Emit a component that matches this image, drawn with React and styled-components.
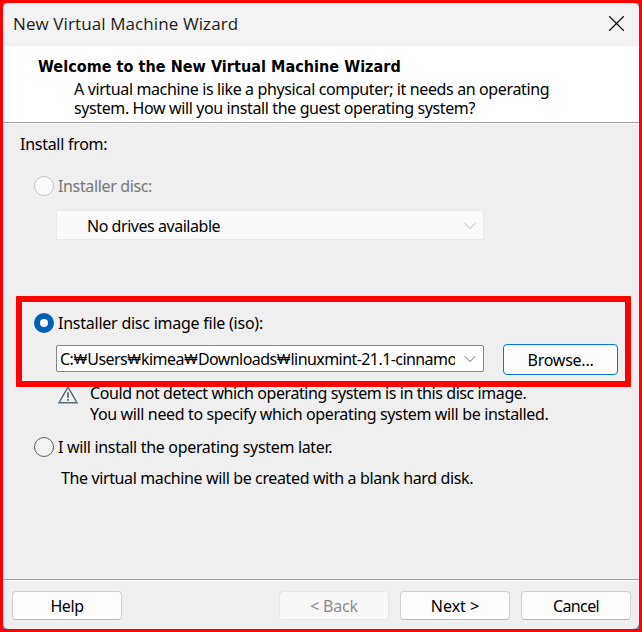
import React from "react";
import styled, { createGlobalStyle } from "styled-components";

const GlobalStyle = createGlobalStyle`
  * { box-sizing: border-box; }
  body { margin: 0; }
`;

const Frame = styled.div`
  width: 642px;
  height: 632px;
  border: 3px solid #ff0000;
  background: #7c8796;
  font: 16px/20px "Noto Sans", sans-serif;
  color: #000;
  overflow: hidden;
`;

const Dialog = styled.main`
  display: flex;
  flex-direction: column;
  height: 100%;
  border-radius: 6px;
  overflow: hidden;
  background: #efefef;
`;

const TitleBar = styled.header`
  display: flex;
  align-items: center;
  justify-content: space-between;
  flex: none;
  height: 43px;
  padding: 0 14px 2px 10px;
  background: #f3f3f3;
`;

const Title = styled.h1`
  margin: 0;
  font: 400 17px/24px "Open Sans", sans-serif;
  letter-spacing: 0.1px;
  color: #1a1a1a;
`;

const CloseButton = styled.button`
  display: flex;
  padding: 0;
  border: 0;
  background: none;
`;

const Banner = styled.section`
  flex: none;
  height: 78px;
  padding: 10px 0 0 35px;
  background: #fff;
  border-bottom: 1px solid #fff;
  box-shadow: inset 0 -1px #a0a0a0;
`;

const BannerTitle = styled.h2`
  margin: 0;
  font: 700 16px/22px "DejaVu Sans Condensed", "DejaVu Sans", sans-serif;
  letter-spacing: 0.05px;
  white-space: nowrap;
`;

const BannerText = styled.div`
  padding: 2px 0 0 36px;
  line-height: 19px;
`;

const Line = styled.div`
  white-space: pre;
  letter-spacing: ${(p) => p.$spacing}px;
`;

const Body = styled.section`
  display: flex;
  flex-direction: column;
  flex: 1;
  padding: 10px 10px 0 17px;
`;

const Option = styled.label`
  display: flex;
  align-items: center;
  gap: 4px;
  height: 20px;
  margin: ${(p) => p.$top}px 0 0 14px;
  color: ${(p) => (p.$disabled ? "#787878" : "#000")};
`;

const Radio = styled.span`
  flex: none;
  width: 20px;
  height: 20px;
  border-radius: 50%;
  border: ${(p) => (p.$checked ? "6px solid #005fb8" : `1px solid ${p.$disabled ? "#c4c4c4" : "#626262"}`)};
  background: ${(p) => (p.$checked ? "#fff" : p.$disabled ? "#fbfbfb" : "#f3f3f3")};
`;

const Combo = styled.div`
  display: flex;
  align-items: center;
  justify-content: space-between;
  width: 428px;
  padding-right: 7px;
`;

const DriveCombo = styled(Combo)`
  height: 30px;
  margin: 14px 0 0 36px;
  padding-left: 30px;
  padding-top: 2px;
  background: #fafafa;
  border: 1px solid #e8e8e8;
  border-radius: 2px;
`;

const PathCombo = styled(Combo)`
  height: 27px;
  margin-top: 1px;
  padding-left: 3px;
  background: #fff;
  border: 1px solid #868686;
  border-radius: 2px;
`;

const Path = styled.div`
  display: flex;
  width: 395px;
  overflow: hidden;
  white-space: pre;
  letter-spacing: -0.57px;
`;

const Won = styled.span`
  display: flex;
  justify-content: center;
  flex: none;
  width: 14px;
  font: 300 14px/20px "Open Sans", sans-serif;
  letter-spacing: 0;
`;

const ImageSource = styled.div`
  position: relative;
  margin-top: 73px;
`;

const Highlight = styled.div`
  position: absolute;
  z-index: 1;
  inset: -17px -2px -12px -4px;
  border: 6px solid #ff0000;
  border-radius: 1px;
  pointer-events: none;
`;

const PathRow = styled.div`
  display: flex;
  align-items: flex-start;
  gap: 19px;
  margin: 11px 0 0 36px;
`;

const Button = styled.button`
  display: flex;
  align-items: center;
  justify-content: center;
  width: 110px;
  height: 29px;
  padding: 1px 0 0;
  font: inherit;
  white-space: pre;
  letter-spacing: ${(p) => p.$spacing}px;
  color: ${(p) => (p.disabled ? "#8c8c8c" : "#000")};
  background: ${(p) => (p.disabled ? "#f8f8f8" : "#fdfdfd")};
  border: 1px solid ${(p) => (p.disabled ? "#e6e6e6" : "#d0d0d0")};
  border-bottom-color: ${(p) => (p.disabled ? "#e6e6e6" : "#bababa")};
  border-radius: 4px;
`;

const BrowseButton = styled(Button)`
  width: 115px;
  height: 31px;
  border: 1px solid #0078d4;
`;

const Notice = styled.div`
  display: flex;
  gap: 12px;
  line-height: 21px;
  margin: 8px 0 0 38px;
  svg { flex: none; margin-top: 3px; }
`;

const Hint = styled.div`
  margin: 11px 0 0 41px;
`;

const Footer = styled.footer`
  display: flex;
  align-items: flex-start;
  flex: none;
  height: 50px;
  padding: 11px 8px 0 9px;
  border-top: 1px solid #a0a0a0;
  box-shadow: inset 0 1px #fff;
`;

const Navigation = styled.div`
  display: flex;
  gap: 11px;
  margin-left: auto;
`;

const Chevron = ({ color }) => (
  <svg width="12" height="8" viewBox="0 0 12 8" fill="none" stroke={color}>
    <path d="M.7 1.2 6 6.5l5.3-5.3" />
  </svg>
);

const Warning = () => (
  <svg width="20" height="18" viewBox="0 0 20 18" fill="none" stroke="#5d6b78" strokeWidth="1.5">
    <path d="M10 1.2 19 16.7H1Z" />
    <path d="M10 6.2v5.5M10 13v1.7" strokeWidth="1.8" />
  </svg>
);

const segments = ["C:", "Users", "kimea", "Downloads", "linuxmint-21.1-cinnamon"];

export default function App() {
  return (
    <>
      <GlobalStyle />
      <Frame>
        <Dialog>
          <TitleBar>
            <Title>New Virtual Machine Wizard</Title>
            <CloseButton aria-label="Close">
              <svg width="17" height="17" viewBox="0 0 17 17" stroke="#111" strokeWidth="1.25">
                <path d="m1.2 1.2 14.6 14.6M15.8 1.2 1.2 15.8" />
              </svg>
            </CloseButton>
          </TitleBar>
          <Banner>
            <BannerTitle>Welcome to the New Virtual Machine Wizard</BannerTitle>
            <BannerText>
              <Line $spacing={-0.375}>A virtual machine is like a physical computer; it needs an operating</Line>
              <Line $spacing={-0.385}>system. How will you install the guest operating system?</Line>
            </BannerText>
          </Banner>
          <Body>
            <Line $spacing={-0.28}>Install from:</Line>
            <Option $top={22} $disabled>
              <Radio $disabled />
              <Line $spacing={-0.36}>Installer disc:</Line>
            </Option>
            <DriveCombo>
              <Line $spacing={-0.46}>No drives available</Line>
              <Chevron color="#b4b4b4" />
            </DriveCombo>
            <ImageSource>
              <Highlight />
              <Option $top={0}>
                <Radio $checked />
                <Line $spacing={-0.24}>Installer disc image file (iso):</Line>
              </Option>
              <PathRow>
                <PathCombo>
                  <Path>
                    {segments.map((name, i) => (
                      <React.Fragment key={name}>
                        {i > 0 && <Won>₩</Won>}
                        <span>{name}</span>
                      </React.Fragment>
                    ))}
                  </Path>
                  <Chevron color="#6a6a6a" />
                </PathCombo>
                <BrowseButton $spacing={-0.25}>Browse...</BrowseButton>
              </PathRow>
            </ImageSource>
            <Notice>
              <Warning />
              <div>
                <Line $spacing={-0.42}>Could not detect which operating system is in this disc image.</Line>
                <Line $spacing={-0.36}>You will need to specify which operating system will be installed.</Line>
              </div>
            </Notice>
            <Option $top={12}>
              <Radio />
              <Line $spacing={-0.32}>I will install the operating system later.</Line>
            </Option>
            <Hint>
              <Line $spacing={-0.375}>The virtual machine will be created with a blank hard disk.</Line>
            </Hint>
          </Body>
          <Footer>
            <Button $spacing={-0.4}>Help</Button>
            <Navigation>
              <Button $spacing={-0.2} disabled>{"< Back"}</Button>
              <Button $spacing={0}>{"Next >"}</Button>
              <Button $spacing={-0.6}>Cancel</Button>
            </Navigation>
          </Footer>
        </Dialog>
      </Frame>
    </>
  );
}
